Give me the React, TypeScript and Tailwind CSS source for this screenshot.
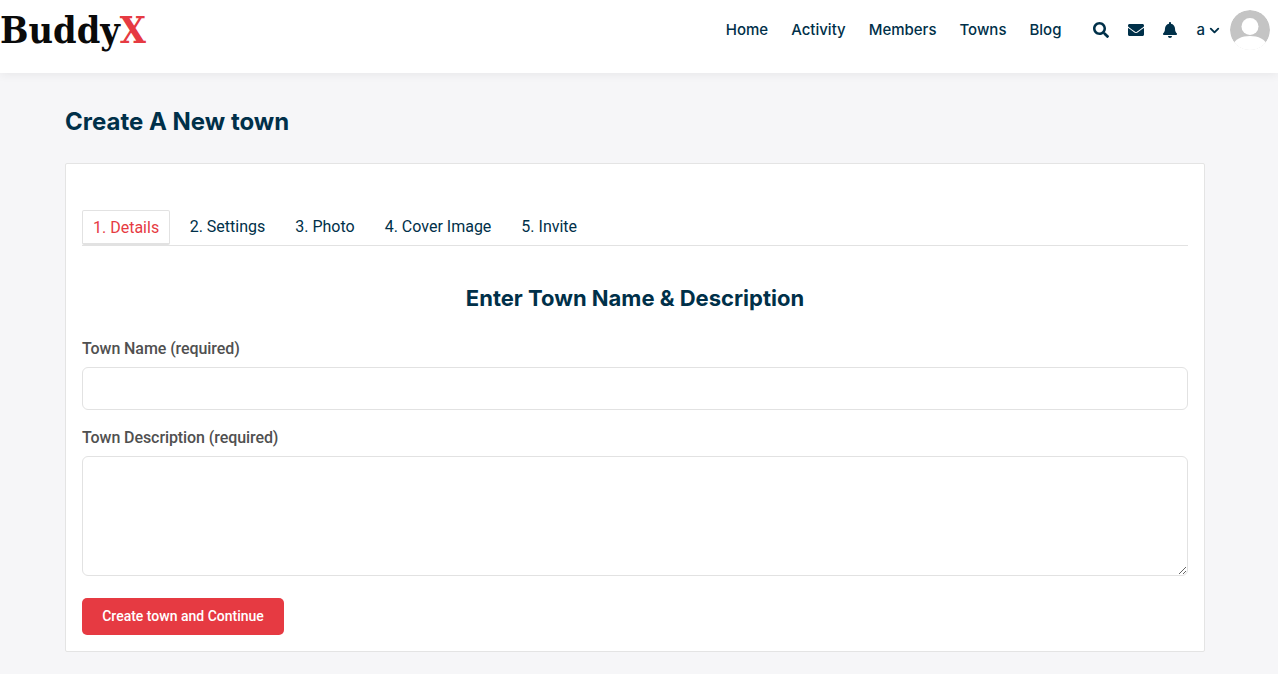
import { FaBell, FaEnvelope, FaSearch } from 'react-icons/fa'
import { FiChevronDown } from 'react-icons/fi'

const navLinks = ['Home', 'Activity', 'Members', 'Towns', 'Blog']
const tabs = ['2. Settings', '3. Photo', '4. Cover Image', '5. Invite']

function Avatar() {
  return (
    <svg viewBox="0 0 40 40" className="h-10 w-10 rounded-full">
      <circle cx="20" cy="20" r="20" fill="#c4c4c4" />
      <circle cx="20" cy="16.5" r="8.5" fill="#fff" />
      <path d="M3 36c1-7 9-10 17-10s16 3 17 10v4H3z" fill="#fff" />
    </svg>
  )
}

function Header() {
  return (
    <header className="relative flex h-[73px] items-start justify-between bg-white pt-[10px] pr-2 shadow-[0_1px_10px_rgba(0,0,0,0.07)]">
      <div className="font-['DejaVu_Serif_Condensed',serif] text-[37.5px] leading-10 font-bold text-[#0a0a0a]">
        Buddy<span className="text-[#e63a42]">X</span>
      </div>
      <div className="flex h-10 items-center font-['Inter',sans-serif] text-[#003049]">
        <nav className="flex items-center gap-[23px] text-[15px] font-medium">
          {navLinks.map((link) => (
            <a key={link}>{link}</a>
          ))}
        </nav>
        <div className="ml-[32px] flex items-center text-base">
          <FaSearch />
          <FaEnvelope className="ml-[19px]" />
          <FaBell className="ml-[18px]" />
        </div>
        <div className="ml-[18px] flex items-center gap-[2px] text-[15px] font-medium">
          a <FiChevronDown className="text-[15px]" strokeWidth={3} />
        </div>
        <div className="ml-[8px]">
          <Avatar />
        </div>
      </div>
    </header>
  )
}

export default function App() {
  return (
    <div className="min-h-screen w-full bg-[#f6f6f8] font-['Roboto',sans-serif]">
      <Header />
      <main className="px-[65px] pt-[33px] pb-[22px]">
        <h1 className="font-['Inter',sans-serif] text-2xl leading-8 font-bold text-[#003049]">Create A New town</h1>
        <div className="mt-[25px] w-[1140px] rounded-[2px] border border-[#e4e4e4] bg-white px-4 pt-[46px] pb-4">
          <div className="flex h-[36px] items-stretch border-b border-[#e2e2e2] text-base text-[#003049]">
            <div className="mr-[4.5px] h-[35px] rounded-[2px] border border-b-2 border-[#e2e2e2] px-[10px] pt-[5px] leading-6 text-[#e63a42]">
              1. Details
            </div>
            {tabs.map((tab) => (
              <div key={tab} className="px-[15px] pt-[5px] leading-6">
                {tab}
              </div>
            ))}
          </div>
          <h2 className="mt-[38px] text-center font-['Inter',sans-serif] text-[22px] leading-7 font-bold text-[#003049]">
            Enter Town Name &amp; Description
          </h2>
          <label className="mt-[25px] block text-base leading-6 font-medium tracking-[-0.08px] text-[#505050]">Town Name (required)</label>
          <input className="mt-[6px] block h-[43px] w-full rounded-md border border-[#e2e2e2] bg-white outline-none" />
          <label className="mt-[16px] block text-base leading-6 font-medium tracking-[-0.08px] text-[#505050]">Town Description (required)</label>
          <textarea className="mt-[6px] block h-[120px] w-full rounded-md border border-[#e2e2e2] bg-white outline-none" />
          <button className="mt-[22px] block h-[37px] w-[202px] rounded-[5px] bg-[#e63a42] pb-[2px] text-sm font-medium text-white">
            Create town and Continue
          </button>
        </div>
      </main>
    </div>
  )
}
